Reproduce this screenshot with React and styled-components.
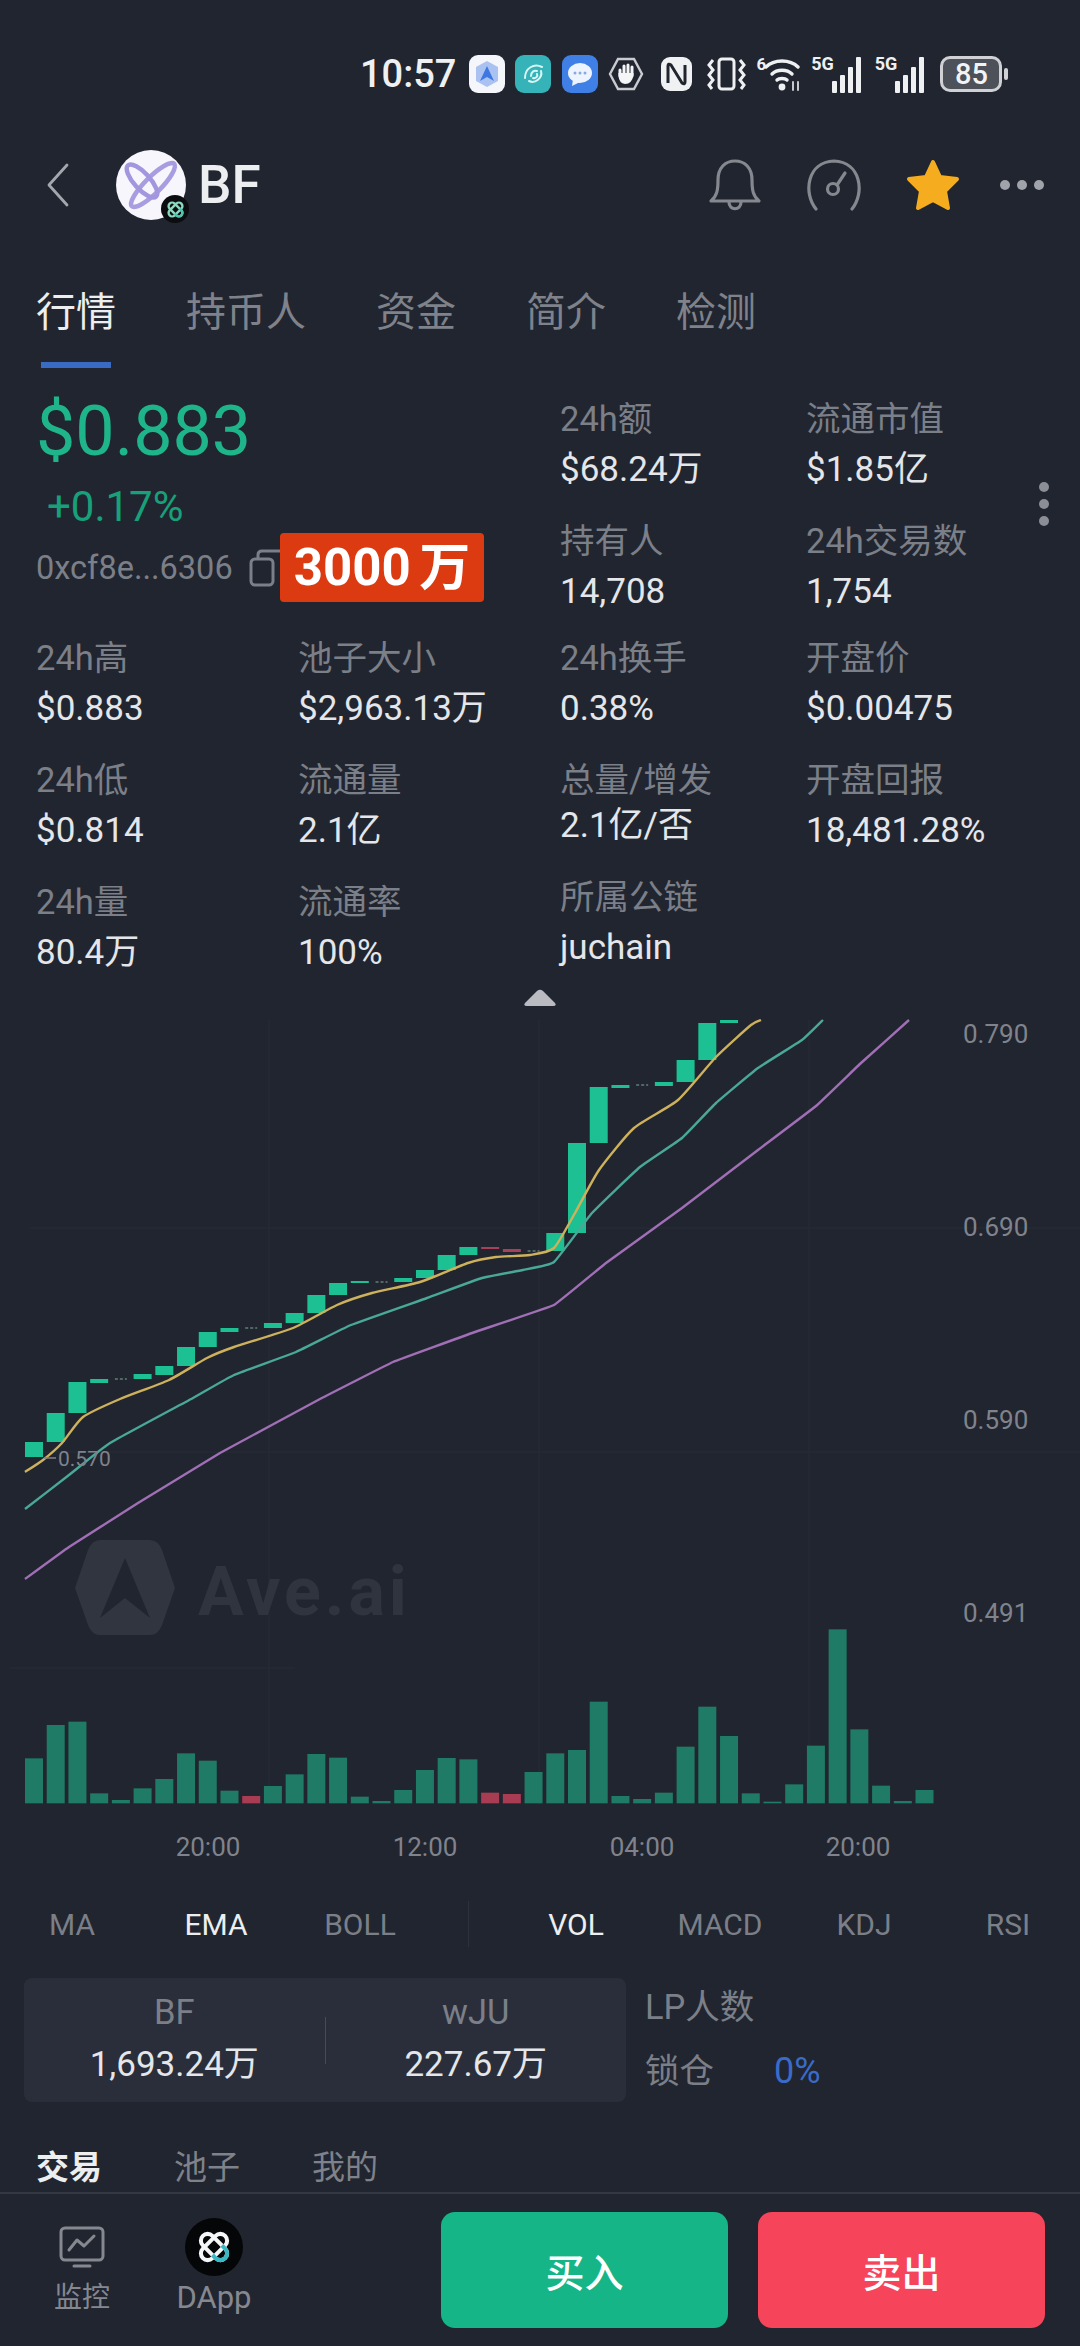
import React from "react";
import styled, { createGlobalStyle } from "styled-components";

const FONT = `Roboto, "Noto Sans CJK SC", "Noto Sans", sans-serif`;

const Global = createGlobalStyle`
  html, body { margin: 0; padding: 0; background: #21252f; }
  * { box-sizing: border-box; }
`;

const Page = styled.div`
  width: 1080px;
  height: 2346px;
  overflow: hidden;
  background: #21252f;
  font-family: ${FONT};
  color: #e4e6ea;
  display: flex;
  flex-direction: column;
`;

const StatusBar = styled.div`
  height: 120px;
  padding: 52px 0 0 360px;
  display: flex;
  align-items: flex-start;
`;
const Time = styled.span`
  font-size: 38px;
  line-height: 44px;
  font-weight: 500;
  color: #eef0f2;
`;
const StatusIcon = styled.span`
  display: flex;
  align-items: center;
  justify-content: center;
  height: 44px;
  margin-left: ${(p) => p.$gap}px;
`;
const AppTile = styled.span`
  width: 36px;
  height: 38px;
  border-radius: 9px;
  background: ${(p) => p.$bg};
  display: flex;
  align-items: center;
  justify-content: center;
`;
const SignalLabel = styled.span`
  font-size: ${(p) => p.$size}px;
  font-weight: 700;
  line-height: 18px;
  color: #eef0f2;
  align-self: flex-start;
  margin-top: 3px;
  margin-right: ${(p) => p.$overlap}px;
`;
const Battery = styled.span`
  width: 62px;
  height: 36px;
  border: 3px solid #cfd1d5;
  border-radius: 10px;
  background: #4d5159;
  font-size: 29px;
  font-weight: 500;
  line-height: 30px;
  text-align: center;
  color: #f2f3f5;
`;
const BatteryNub = styled.span`
  width: 4px;
  height: 12px;
  margin-left: 2px;
  border-radius: 2px;
  background: #cfd1d5;
`;

const Header = styled.header`
  height: 130px;
  padding: 0 35px 0 46px;
  display: flex;
  align-items: center;
`;
const Avatar = styled.div`
  position: relative;
  width: 70px;
  height: 70px;
  margin-left: 46px;
  border-radius: 50%;
  background: #f7f6fc;
`;
const AvatarBadge = styled.div`
  position: absolute;
  right: -3px;
  bottom: -3px;
  width: 28px;
  height: 28px;
  border-radius: 50%;
  background: #0b0d10;
  display: flex;
  align-items: center;
  justify-content: center;
`;
const Symbol = styled.h1`
  margin: 0 0 0 12px;
  font-size: 53px;
  font-weight: 500;
  color: #eceef0;
  flex: 1;
`;
const HeaderActions = styled.div`
  display: flex;
  align-items: center;
  gap: 43px;
`;

const Tabs = styled.nav`
  height: 118px;
  padding: 40px 0 0 36px;
  display: flex;
  gap: 70px;
  align-items: flex-start;
`;
const Tab = styled.div`
  display: flex;
  flex-direction: column;
  align-items: center;
  font-size: 40px;
  line-height: 46px;
  color: ${(p) => (p.$active ? "#eceef0" : "#7f828a")};
  &::after {
    content: "";
    width: 70px;
    height: 6px;
    margin-top: 26px;
    background: ${(p) => (p.$active ? "#3a6bc4" : "transparent")};
  }
`;

const InfoGrid = styled.section`
  position: relative;
  margin: 31px 0 0 36px;
  display: grid;
  grid-template-columns: 262px 262px 246px 1fr;
  grid-template-rows: 122px 117px 122px 122px 91px;
`;
const PriceBlock = styled.div`
  grid-column: 1 / 3;
  grid-row: 1 / 3;
  display: flex;
  flex-direction: column;
`;
const Price = styled.div`
  font-size: 70px;
  line-height: 64px;
  color: #1fb58b;
`;
const Change = styled.div`
  margin: 22px 0 0 11px;
  font-size: 42px;
  line-height: 44px;
  color: #17a07a;
`;
const AddressRow = styled.div`
  position: relative;
  margin-top: 19px;
  display: flex;
  align-items: center;
  gap: 16px;
  font-size: 32.5px;
  line-height: 40px;
  color: #7b7f88;
`;
const Badge = styled.div`
  position: absolute;
  left: 244px;
  top: -15px;
  width: 204px;
  height: 69px;
  border-radius: 4px;
  background: #dc3b12;
  color: #fff;
  font-size: 51px;
  font-weight: 700;
  line-height: 69px;
  text-align: center;
  word-spacing: -4px;
`;
const Stat = styled.div`
  display: flex;
  flex-direction: column;
  gap: ${(p) => p.$gap ?? 11}px;
  margin-top: ${(p) => p.$lift ?? 0}px;
`;
const Label = styled.div`
  font-size: 34.5px;
  line-height: 40px;
  color: #7b7f88;
  white-space: nowrap;
`;
const Value = styled.div`
  font-size: 35px;
  line-height: 40px;
  color: #e4e6ea;
  white-space: nowrap;
`;
const Kebab = styled.div`
  position: absolute;
  right: 31px;
  top: 83px;
  display: flex;
  flex-direction: column;
  gap: 7px;
  & > span {
    width: 10px;
    height: 10px;
    border-radius: 50%;
    background: #8b8e96;
  }
`;
const Collapse = styled.svg`
  align-self: center;
  margin-top: 16px;
  flex: none;
`;

const ChartSvg = styled.svg`
  display: block;
  width: 1080px;
  height: 860px;
  margin-top: 3px;
  flex: none;
  font-family: ${FONT};
`;

const Indicators = styled.div`
  height: 108px;
  display: grid;
  grid-template-columns: repeat(3, 144px) 72px repeat(4, 144px);
  align-items: center;
  font-size: 30px;
`;
const Indicator = styled.div`
  text-align: center;
  color: ${(p) => (p.$active ? "#eceef0" : "#7b7f88")};
`;
const IndicatorDivider = styled.div`
  justify-self: center;
  width: 1px;
  height: 46px;
  background: #2d313b;
`;

const PoolRow = styled.section`
  display: flex;
  padding-left: 24px;
  gap: 19px;
`;
const PoolCard = styled.div`
  width: 602px;
  height: 124px;
  border-radius: 8px;
  background: #2a2e3a;
  display: flex;
  align-items: center;
`;
const PoolSide = styled.div`
  flex: 1;
  display: flex;
  flex-direction: column;
  align-items: center;
  gap: 13px;
  padding-bottom: 4px;
`;
const PoolDivider = styled.div`
  width: 1px;
  height: 47px;
  background: #474b57;
`;
const LpColumn = styled.div`
  display: flex;
  flex-direction: column;
  gap: 24px;
  padding-top: 9px;
`;
const LockRow = styled.div`
  display: flex;
  gap: 60px;
`;
const LockValue = styled.span`
  font-size: 36px;
  line-height: 40px;
  color: #3a6bc8;
`;

const TradeTabs = styled.nav`
  margin-top: 44px;
  padding-left: 36px;
  display: flex;
  gap: 72px;
  height: 46px;
`;
const TradeTab = styled.div`
  font-size: 33px;
  line-height: 44px;
  font-weight: ${(p) => (p.$active ? 700 : 400)};
  color: ${(p) => (p.$active ? "#eceef0" : "#7f828a")};
`;

const Footer = styled.footer`
  flex: 1;
  border-top: 2px solid #343843;
  padding: 18px 35px 0 32px;
  display: flex;
  align-items: flex-start;
`;
const NavItem = styled.div`
  width: 100px;
  margin-right: 32px;
  display: flex;
  flex-direction: column;
  align-items: center;
`;
const NavIcon = styled.div`
  height: 62px;
  margin-top: 4px;
  display: flex;
  align-items: center;
  justify-content: center;
`;
const NavLabel = styled.div`
  font-size: ${(p) => p.$size}px;
  line-height: 40px;
  color: #85888f;
`;
const DappCircle = styled.div`
  width: 58px;
  height: 58px;
  border-radius: 50%;
  background: #050607;
  display: flex;
  align-items: center;
  justify-content: center;
`;
const Actions = styled.div`
  margin-left: auto;
  display: flex;
  gap: 30px;
`;
const ActionButton = styled.button`
  width: 287px;
  height: 116px;
  border: 0;
  border-radius: 14px;
  background: ${(p) => p.$bg};
  color: #fff;
  font-family: ${FONT};
  font-size: 39px;
  font-weight: 500;
`;

/* chart data, page coordinates */
const candles = [
  [1442, 1457], [1413, 1442], [1382, 1413], [1379, 1383], [1379, 1380, "t"], [1374, 1379], [1366, 1375],
  [1347, 1366], [1332, 1347], [1328, 1332], [1328, 1329, "t"], [1323, 1328], [1313, 1323], [1295, 1313],
  [1283, 1295], [1281, 1283], [1282, 1283, "t"], [1278, 1282], [1270, 1278], [1255, 1270], [1247, 1255],
  [1247, 1249, "r"], [1249, 1252, "r"], [1251, 1252, "t"], [1233, 1251], [1143, 1233], [1087, 1143],
  [1085, 1088], [1085, 1086, "t"], [1082, 1086], [1060, 1082], [1023, 1060], [1020, 1023],
];
const volumeTops = [
  1075, 975, 965, 1180, 1200, 1165, 1137, 1060, 1082, 1172, 1188, 1158, 1123, 1062, 1073, 1190, 1203, 1170, 1110, 1074,
  1078, 1178, 1182, 1116, 1060, 1050, 905, 1188, 1197, 1178, 1040, 920, 1008, 1180, 1205, 1153, 1037, 688, 988, 1157,
  1203, 1170,
];
const redVolumes = [10, 21, 22];
const yellow = [[25, 1472], [43, 1460], [62, 1443], [83, 1417], [120, 1399], [169, 1380], [207, 1358], [234, 1347], [293, 1328], [337, 1305], [372, 1293], [420, 1282], [468, 1263], [496, 1257], [530, 1255], [554, 1248], [575, 1213], [599, 1170], [634, 1128], [678, 1100], [716, 1057], [751, 1025], [761, 1020]];
const teal = [[25, 1509], [69, 1475], [110, 1443], [193, 1398], [234, 1375], [296, 1352], [351, 1325], [427, 1298], [482, 1278], [523, 1270], [554, 1262], [592, 1213], [640, 1167], [682, 1138], [716, 1103], [758, 1068], [802, 1040], [823, 1020]];
const purple = [[25, 1579], [69, 1547], [138, 1503], [220, 1453], [320, 1399], [393, 1362], [475, 1332], [554, 1305], [606, 1263], [682, 1208], [758, 1150], [816, 1106], [861, 1063], [909, 1020]];

const smooth = (pts, t) => {
  let d = `M${pts[0][0]} ${pts[0][1]}`;
  for (let i = 0; i < pts.length - 1; i++) {
    const p0 = pts[i - 1] || pts[i];
    const p1 = pts[i];
    const p2 = pts[i + 1];
    const p3 = pts[i + 2] || p2;
    d += ` C${p1[0] + (p2[0] - p0[0]) * t} ${p1[1] + (p2[1] - p0[1]) * t} ${p2[0] - (p3[0] - p1[0]) * t} ${p2[1] - (p3[1] - p1[1]) * t} ${p2[0]} ${p2[1]}`;
  }
  return d;
};
const barX = (i) => 25 + i * 21.72;

const Chart = () => (
  <ChartSvg viewBox="0 1010 1080 860">
    <g stroke="#262a34" strokeWidth="1.5">
      <line x1="269" y1="1020" x2="269" y2="1805" />
      <line x1="539" y1="1020" x2="539" y2="1805" />
      <line x1="809" y1="1020" x2="809" y2="1805" />
      <line x1="30" y1="1228" x2="1080" y2="1228" />
      <line x1="30" y1="1452" x2="1080" y2="1452" />
      <line x1="10" y1="1668" x2="295" y2="1668" />
    </g>
    {/* watermark */}
    <path d="M112 1540 L150 1540 Q158 1540 162 1550 L175 1588 L162 1625 Q158 1635 150 1635 L100 1635 Q92 1635 88 1625 L75 1588 L88 1550 Q92 1540 100 1540 Z" fill="#31353f" />
    <path d="M125 1558 L150 1618 L125 1598 L100 1618 Z" fill="#21252f" />
    <text x="198" y="1615" fontSize="68" fontWeight="700" letterSpacing="4" fill="#30343e">Ave.ai</text>
    {volumeTops.map((top, i) => (
      <rect
        key={i}
        x={barX(i)}
        y={1400 + top / 3}
        width="18"
        height={(1210 - top) / 3}
        fill={redVolumes.includes(i) ? "#a83c53" : "#1f7b65"}
      />
    ))}
    {candles.map(([top, bottom, kind], i) =>
      kind === "t" ? (
        <line key={i} x1={barX(i) + 3} x2={barX(i) + 15} y1={top} y2={top} stroke="#5f7f79" strokeWidth="1.5" strokeDasharray="3 2" />
      ) : (
        <rect key={i} x={barX(i)} y={top} width="18" height={bottom - top} fill={kind === "r" ? "#a8405a" : "#1cc092"} />
      )
    )}
    <path d={smooth(purple, 0.03)} fill="none" stroke="#a06fb6" strokeWidth="2.4" strokeLinejoin="round" />
    <path d={smooth(teal, 0.06)} fill="none" stroke="#4aa899" strokeWidth="2.4" />
    <path d={smooth(yellow, 0.1)} fill="none" stroke="#cdb15c" strokeWidth="2.4" />
    <line x1="44" y1="1458" x2="56" y2="1458" stroke="#7f828b" strokeWidth="1.5" />
    <text x="58" y="1466" fontSize="21" fill="#7f828b">0.570</text>
    <g fontSize="26" fill="#80838c">
      <text x="963" y="1043">0.790</text>
      <text x="963" y="1236">0.690</text>
      <text x="963" y="1429">0.590</text>
      <text x="963" y="1622">0.491</text>
      <text x="208" y="1856" textAnchor="middle">20:00</text>
      <text x="425" y="1856" textAnchor="middle">12:00</text>
      <text x="642" y="1856" textAnchor="middle">04:00</text>
      <text x="858" y="1856" textAnchor="middle">20:00</text>
    </g>
  </ChartSvg>
);

const KnotLogo = ({ size, stroke = "#f4f6f7", accent = "#38b8c4", width = 3.6 }) => (
  <svg width={size} height={size} viewBox="0 0 32 32" fill="none" stroke={stroke} strokeWidth={width}>
    <g transform="rotate(45 16 16)">
      <rect x="10" y="2" width="12" height="28" rx="6" />
    </g>
    <g transform="rotate(-45 16 16)">
      <rect x="10" y="2" width="12" height="28" rx="6" />
      <path d="M10 20 V24 A6 6 0 0 0 22 24 V20" stroke={accent} />
    </g>
  </svg>
);

const StatusIcons = () => (
  <>
    <StatusIcon $gap={13}>
      <AppTile $bg="#f4f6fb">
        <svg width="26" height="28" viewBox="0 0 26 28">
          <path d="M13 1 L24 7 V21 L13 27 L2 21 V7 Z" fill="#a9c2f2" />
          <path d="M13 6 L20 21 L13 17 L6 21 Z" fill="#3f77e0" />
        </svg>
      </AppTile>
    </StatusIcon>
    <StatusIcon $gap={10}>
      <AppTile $bg="#35b3b8">
        <svg width="28" height="28" viewBox="0 0 28 28" fill="none" stroke="#d8f5f3" strokeWidth="2" strokeLinecap="round">
          <path d="M6 18 C6 8 15 3 23 7" />
          <path d="M10 21 C16 24 24 18 22 11" />
          <path d="M12 16 C12 12 15 10 18 11 M14 18 C17 19 19 16 18 14" />
        </svg>
      </AppTile>
    </StatusIcon>
    <StatusIcon $gap={11}>
      <AppTile $bg="#3f7fe6">
        <svg width="28" height="26" viewBox="0 0 28 26">
          <ellipse cx="14" cy="12" rx="12" ry="10" fill="#eef4ff" />
          <path d="M7 18 L6 25 L14 21 Z" fill="#eef4ff" />
          <circle cx="9" cy="12" r="1.5" fill="#8aa9de" />
          <circle cx="14" cy="12" r="1.5" fill="#8aa9de" />
          <circle cx="19" cy="12" r="1.5" fill="#8aa9de" />
        </svg>
      </AppTile>
    </StatusIcon>
    <StatusIcon $gap={10}>
      <svg width="36" height="34" viewBox="0 0 36 34" fill="none">
        <path d="M10 2 H26 L34 17 L26 32 H10 L2 17 Z" stroke="#c9cbd0" strokeWidth="2.4" />
        <g stroke="#f4f5f6" strokeWidth="3" strokeLinecap="round">
          <path d="M12 13 V19 M16 9 V18 M20 8 V18 M24 10 V19" />
        </g>
        <path d="M10.5 19 Q11 26 17 27 Q24 27 25.5 18 L25.5 16 H10.5 Z" fill="#f4f5f6" />
      </svg>
    </StatusIcon>
    <StatusIcon $gap={16}>
      <svg width="33" height="36" viewBox="0 0 33 36" fill="none">
        <rect x="1" y="1" width="31" height="34" rx="9" fill="#f0f1f3" />
        <path d="M8 27 V10 Q8 7 11 9 L22 27 Q25 29 25 26 V9" strokeWidth="3" stroke="#21252f" />
      </svg>
    </StatusIcon>
    <StatusIcon $gap={14}>
      <svg width="39" height="34" viewBox="0 0 39 34" fill="none" stroke="#eef0f2" strokeWidth="3">
        <rect x="12" y="2" width="15" height="30" rx="3" />
        <path d="M6 3 L2 8 L6 13 L2 18 L6 23 L2 28 L5 32" />
        <path d="M33 3 L37 8 L33 13 L37 18 L33 23 L37 28 L34 32" />
      </svg>
    </StatusIcon>
    <StatusIcon $gap={10}>
      <SignalLabel $size={17} $overlap={-2}>6</SignalLabel>
      <svg width="38" height="36" viewBox="0 0 38 36" fill="none" stroke="#eef0f2" strokeWidth="3.4" strokeLinecap="round">
        <path d="M2 11 C10 3 26 3 34 11" />
        <path d="M8 18 C13 13 23 13 28 18" />
        <path d="M13 24 C15 22 21 22 23 24" />
        <circle cx="18" cy="31" r="3.4" fill="#eef0f2" stroke="none" />
        <path d="M29 34 V26 M34 26 V34" strokeWidth="2" stroke="#c6c8cc" />
      </svg>
    </StatusIcon>
    {[810, 870].map((x) => (
      <StatusIcon key={x} $gap={x === 810 ? 9 : 12}>
        <SignalLabel $size={18} $overlap={-3}>5G</SignalLabel>
        <svg width="32" height="38" viewBox="0 0 32 38" fill="#eef0f2">
          <rect x="1" y="26" width="5" height="12" rx="1" />
          <rect x="9" y="20" width="5" height="18" rx="1" />
          <rect x="17" y="12" width="5" height="26" rx="1" />
          <rect x="25" y="2" width="5" height="36" rx="1" />
        </svg>
      </StatusIcon>
    ))}
    <StatusIcon $gap={14}>
      <Battery>85</Battery>
      <BatteryNub />
    </StatusIcon>
  </>
);

const HeaderIcons = () => (
  <HeaderActions>
    <svg width="54" height="54" viewBox="0 0 54 54" fill="none" stroke="#85888f" strokeWidth="3.2" strokeLinejoin="round">
      <path d="M3 43 C9 38 10 32 10 22 C10 10 17 3 27 3 C37 3 44 10 44 22 C44 32 45 38 51 43 Z" />
      <path d="M21 44 C21 53 33 53 33 44" />
    </svg>
    <svg width="58" height="52" viewBox="0 0 58 52" fill="none" stroke="#85888f" strokeWidth="3.2" strokeLinecap="round">
      <path d="M11 50 C-2 34 2 3 29 2 C56 3 60 34 47 50" />
      <circle cx="28" cy="30" r="5.5" />
      <path d="M32 26 L40 14" />
    </svg>
    <svg width="54" height="52" viewBox="0 0 54 52">
      <path d="M27 3 L34 18 L51 20 L39 32 L42 49 L27 41 L12 49 L15 32 L3 20 L20 18 Z" fill="#f5ad1f" stroke="#f5ad1f" strokeWidth="4" strokeLinejoin="round" />
    </svg>
    <svg width="46" height="12" viewBox="0 0 46 12" fill="#a0a3aa" style={{ marginLeft: -4 }}>
      <circle cx="6" cy="6" r="5" />
      <circle cx="23" cy="6" r="5" />
      <circle cx="40" cy="6" r="5" />
    </svg>
  </HeaderActions>
);

const rightTop = [
  ["24h额", "$68.24万"], ["流通市值", "$1.85亿"], ["持有人", "14,708"], ["24h交易数", "1,754"],
];
const rest = [
  ["24h高", "$0.883"], ["池子大小", "$2,963.13万"], ["24h换手", "0.38%"], ["开盘价", "$0.00475"],
  ["24h低", "$0.814"], ["流通量", "2.1亿"], ["总量/增发", "2.1亿/否", { $gap: 6 }], ["开盘回报", "18,481.28%"],
  ["24h量", "80.4万"], ["流通率", "100%"], ["所属公链", "juchain", { $lift: -5 }],
];

export default function App() {
  return (
    <Page>
      <Global />
      <StatusBar>
        <Time>10:57</Time>
        <StatusIcons />
      </StatusBar>

      <Header>
        <svg width="24" height="44" viewBox="0 0 24 44" fill="none" stroke="#a4a7ad" strokeWidth="2.8" strokeLinecap="round" strokeLinejoin="round">
          <path d="M21 2 L3 22 L21 42" />
        </svg>
        <Avatar>
          <svg width="70" height="70" viewBox="0 0 70 70" fill="none" strokeWidth="4.5">
            <ellipse cx="37" cy="35" rx="30" ry="8" transform="rotate(-45 37 35)" stroke="#a99de2" />
            <ellipse cx="26" cy="31" rx="21" ry="8" transform="rotate(48 26 31)" stroke="#a296de" />
          </svg>
          <AvatarBadge>
            <KnotLogo size={19} stroke="#8fd8c0" accent="#4fc4b0" width={4} />
          </AvatarBadge>
        </Avatar>
        <Symbol>BF</Symbol>
        <HeaderIcons />
      </Header>

      <Tabs>
        <Tab $active>行情</Tab>
        <Tab>持币人</Tab>
        <Tab>资金</Tab>
        <Tab>简介</Tab>
        <Tab>检测</Tab>
      </Tabs>

      <InfoGrid>
        <PriceBlock>
          <Price>$0.883</Price>
          <Change>+0.17%</Change>
          <AddressRow>
            0xcf8e...6306
            <svg width="32" height="38" viewBox="0 0 32 38" fill="none" stroke="#7b7f88" strokeWidth="3">
              <rect x="2" y="10" width="22" height="26" rx="4" />
              <path d="M9 10 V6 Q9 2 13 2 H32" />
            </svg>
            <Badge>3000 万</Badge>
          </AddressRow>
        </PriceBlock>
        {[...rightTop, ...rest].map(([label, value, opts]) => (
          <Stat key={label} {...(opts || {})}>
            <Label>{label}</Label>
            <Value>{value}</Value>
          </Stat>
        ))}
        <Kebab>
          <span />
          <span />
          <span />
        </Kebab>
      </InfoGrid>

      <Collapse width="34" height="18" viewBox="0 0 34 18">
        <path d="M14 2 Q17 -0.5 20 2 L32 14 Q34 17 30 17 L4 17 Q0 17 2 14 Z" fill="#b9bbc0" />
      </Collapse>
      <Chart />

      <Indicators>
        <Indicator>MA</Indicator>
        <Indicator $active>EMA</Indicator>
        <Indicator>BOLL</Indicator>
        <IndicatorDivider />
        <Indicator $active>VOL</Indicator>
        <Indicator>MACD</Indicator>
        <Indicator>KDJ</Indicator>
        <Indicator>RSI</Indicator>
      </Indicators>

      <PoolRow>
        <PoolCard>
          <PoolSide>
            <Label>BF</Label>
            <Value>1,693.24万</Value>
          </PoolSide>
          <PoolDivider />
          <PoolSide>
            <Label>wJU</Label>
            <Value>227.67万</Value>
          </PoolSide>
        </PoolCard>
        <LpColumn>
          <Label>LP人数</Label>
          <LockRow>
            <Label>锁仓</Label>
            <LockValue>0%</LockValue>
          </LockRow>
        </LpColumn>
      </PoolRow>

      <TradeTabs>
        <TradeTab $active>交易</TradeTab>
        <TradeTab>池子</TradeTab>
        <TradeTab>我的</TradeTab>
      </TradeTabs>

      <Footer>
        <NavItem>
          <NavIcon>
            <svg width="46" height="42" viewBox="0 0 46 42" fill="none" stroke="#85888f" strokeWidth="3" strokeLinecap="round" strokeLinejoin="round">
              <rect x="2" y="2" width="42" height="32" rx="4" />
              <path d="M10 24 L18 14 L25 20 L35 10" />
              <path d="M15 40 H31" />
            </svg>
          </NavIcon>
          <NavLabel $size={28}>监控</NavLabel>
        </NavItem>
        <NavItem>
          <NavIcon>
            <DappCircle>
              <KnotLogo size={36} />
            </DappCircle>
          </NavIcon>
          <NavLabel $size={31}>DApp</NavLabel>
        </NavItem>
        <Actions>
          <ActionButton $bg="#15b587">买入</ActionButton>
          <ActionButton $bg="#f6445b">卖出</ActionButton>
        </Actions>
      </Footer>
    </Page>
  );
}
